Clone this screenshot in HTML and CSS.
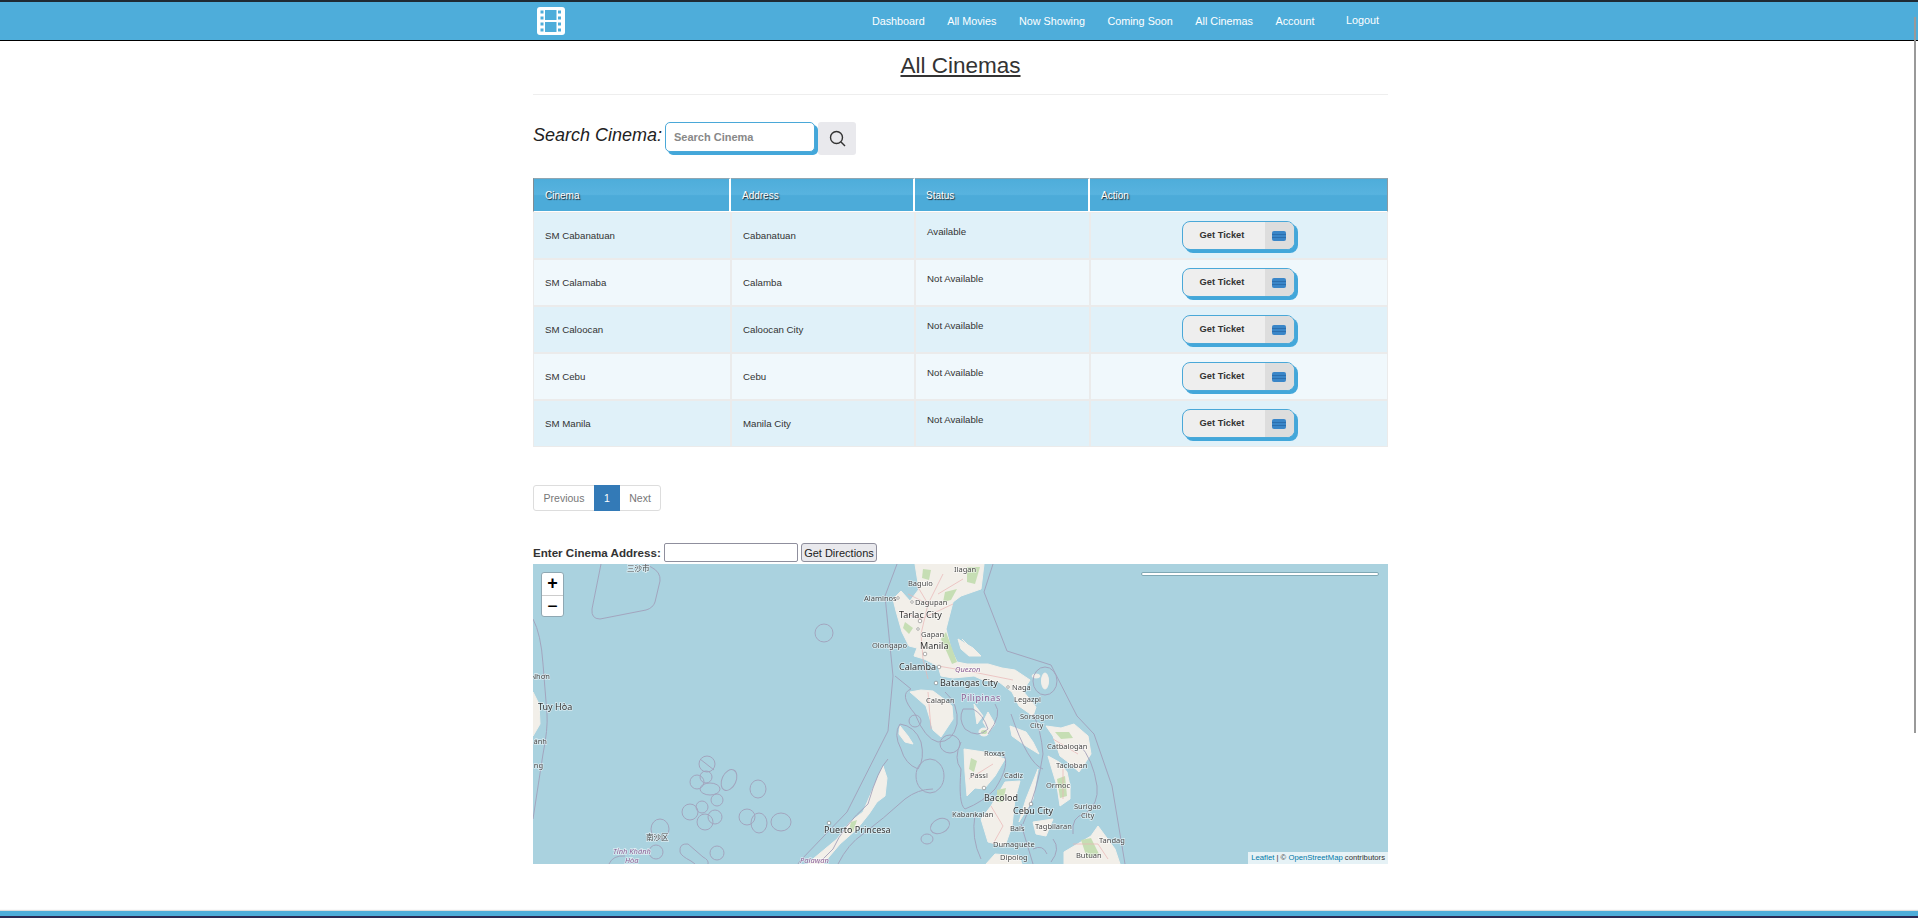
FILE: index.html
```html
<!DOCTYPE html>
<html lang="en">
<head>
    <meta charset="UTF-8">
    <meta name="viewport" content="width=device-width, initial-scale=1.0">
    <title>All Cinemas</title>
    <link rel="stylesheet" href="styles.css">
</head>
<body>
    <header class="topbar">
        <div class="topbar-inner">
            <a class="logo" href="#">
                <svg width="28" height="28" viewBox="0 0 28 28">
                    <rect width="28" height="28" rx="3" fill="#fff"/>
                    <g fill="#4eadda">
                        <rect x="8" y="3" width="11.5" height="10"/>
                        <rect x="8" y="15" width="11.5" height="10"/>
                        <rect x="3.5" y="3.5" width="3" height="3"/>
                        <rect x="3.5" y="9.5" width="3" height="3"/>
                        <rect x="3.5" y="15.5" width="3" height="3"/>
                        <rect x="3.5" y="21.5" width="3" height="3"/>
                        <rect x="21" y="3.5" width="3" height="3"/>
                        <rect x="21" y="9.5" width="3" height="3"/>
                        <rect x="21" y="15.5" width="3" height="3"/>
                        <rect x="21" y="21.5" width="3" height="3"/>
                    </g>
                </svg>
            </a>
            <nav class="nav">
                <a href="#">Dashboard</a>
                <a href="#">All Movies</a>
                <a href="#">Now Showing</a>
                <a href="#">Coming Soon</a>
                <a href="#">All Cinemas</a>
                <a href="#">Account</a>
                <a class="logout" href="#">Logout</a>
            </nav>
        </div>
    </header>

    <div class="scroll-thumb"></div>

    <main class="page">
        <h1 class="page-title">All Cinemas</h1>

        <form class="search-row">
            <label class="search-label" for="search">Search Cinema:</label>
            <input class="search-input" id="search" type="text" placeholder="Search Cinema">
            <button class="search-button" type="button">
                <svg width="17" height="17" viewBox="0 0 17 17" fill="none" stroke="#333" stroke-width="1.4">
                    <circle cx="7.5" cy="7.5" r="6"/>
                    <path d="M12 12l4 4"/>
                </svg>
            </button>
        </form>

        <table class="cinema-table">
            <colgroup>
                <col class="col-cinema">
                <col class="col-address">
                <col class="col-status">
                <col class="col-action">
            </colgroup>
            <thead>
                <tr>
                    <th>Cinema</th>
                    <th>Address</th>
                    <th>Status</th>
                    <th>Action</th>
                </tr>
            </thead>
            <tbody>
                <tr>
                    <td>SM Cabanatuan</td>
                    <td>Cabanatuan</td>
                    <td class="status">Available</td>
                    <td class="action"><a class="ticket-button" href="#"><span class="ticket-text">Get Ticket</span><span class="ticket-icon"><svg width="14" height="10" viewBox="0 0 14 10"><rect width="14" height="10" rx="2" fill="#3a86c8"/><path d="M0 3.5h14M0 6.5h14" stroke="#2c6fae" stroke-width="1"/></svg></span></a></td>
                </tr>
                <tr>
                    <td>SM Calamaba</td>
                    <td>Calamba</td>
                    <td class="status">Not Available</td>
                    <td class="action"><a class="ticket-button" href="#"><span class="ticket-text">Get Ticket</span><span class="ticket-icon"><svg width="14" height="10" viewBox="0 0 14 10"><rect width="14" height="10" rx="2" fill="#3a86c8"/><path d="M0 3.5h14M0 6.5h14" stroke="#2c6fae" stroke-width="1"/></svg></span></a></td>
                </tr>
                <tr>
                    <td>SM Caloocan</td>
                    <td>Caloocan City</td>
                    <td class="status">Not Available</td>
                    <td class="action"><a class="ticket-button" href="#"><span class="ticket-text">Get Ticket</span><span class="ticket-icon"><svg width="14" height="10" viewBox="0 0 14 10"><rect width="14" height="10" rx="2" fill="#3a86c8"/><path d="M0 3.5h14M0 6.5h14" stroke="#2c6fae" stroke-width="1"/></svg></span></a></td>
                </tr>
                <tr>
                    <td>SM Cebu</td>
                    <td>Cebu</td>
                    <td class="status">Not Available</td>
                    <td class="action"><a class="ticket-button" href="#"><span class="ticket-text">Get Ticket</span><span class="ticket-icon"><svg width="14" height="10" viewBox="0 0 14 10"><rect width="14" height="10" rx="2" fill="#3a86c8"/><path d="M0 3.5h14M0 6.5h14" stroke="#2c6fae" stroke-width="1"/></svg></span></a></td>
                </tr>
                <tr>
                    <td>SM Manila</td>
                    <td>Manila City</td>
                    <td class="status">Not Available</td>
                    <td class="action"><a class="ticket-button" href="#"><span class="ticket-text">Get Ticket</span><span class="ticket-icon"><svg width="14" height="10" viewBox="0 0 14 10"><rect width="14" height="10" rx="2" fill="#3a86c8"/><path d="M0 3.5h14M0 6.5h14" stroke="#2c6fae" stroke-width="1"/></svg></span></a></td>
                </tr>
            </tbody>
        </table>

        <div class="pagination">
            <a href="#">Previous</a>
            <a class="active" href="#">1</a>
            <a href="#">Next</a>
        </div>

        <div class="directions">
            <label for="address">Enter Cinema Address:</label>
            <input id="address" type="text">
            <button type="button">Get Directions</button>
        </div>

        <div class="map">
            <svg class="map-tiles" width="855" height="300" viewBox="0 0 855 300">
                <!-- land -->
                <g class="land">
                    <path d="M382,0 L451,0 L448,25 L428,32 L420,38 L413,65 L418,85 L424,98 L434,100 L455,100 L469,104 L482,106 L497,116 L490,127 L503,143 L500,152 L486,142 L479,128 L466,118 L450,116 L441,112 L420,114 L408,112 L405,102 L391,95 L381,92 L384,84 L376,82 L369,68 L363,47 L360,35 L368,27 L377,37 L386,25 Z"/>
                    <path d="M377,128 L388,126 L400,127 L412,136 L419,142 L420,155 L408,173 L400,166 L397,155 L393,142 Z"/>
                    <path d="M513,162 L528,164 L541,160 L555,172 L558,190 L546,208 L535,198 L527,192 L520,172 Z"/>
                    <path d="M515,192 L526,198 L534,208 L537,222 L537,235 L527,242 L524,222 Z"/>
                    <path d="M477,162 L493,168 L500,178 L506,190 L493,182 L479,172 Z"/>
                    <path d="M431,185 L451,188 L472,195 L462,212 L451,225 L442,224 L434,232 L432,208 Z"/>
                    <path d="M472,218 L487,217 L482,235 L479,262 L472,282 L455,278 L448,255 L458,242 Z"/>
                    <path d="M505,205 L500,235 L486,258 L493,235 Z"/>
                    <path d="M500,258 L520,255 L513,272 L503,270 Z"/>
                    <path d="M531,288 L558,272 L565,262 L582,285 L587,300 L531,300 Z"/>
                    <path d="M453,300 L462,290 L486,292 L489,300 Z"/>
                    <path d="M350,202 L342,220 L330,248 L317,258 L304,275 L280,295 L275,300 L290,300 L307,280 L324,265 L336,250 L344,238 L352,232 L354,214 Z"/>
                    <ellipse cx="512" cy="117" rx="3.5" ry="8"/>
                    <path d="M367,162 L375,172 L380,180 L372,178 L366,170 Z"/>
                    <path d="M0,128 L6,140 L7,160 L0,172 Z"/>
                    <path d="M425,75 L440,84 L448,92 L436,92 L428,85 Z"/>
                    <path d="M429,75 L436,82 M441,140 L450,152 L444,160 Z"/>
                    <path d="M455,148 L462,160 L456,168 L450,158 Z"/>
                    <path d="M538,178 L546,176 L548,188 L540,190 Z"/>
                    <ellipse cx="451" cy="168" rx="5" ry="4"/>
                    <ellipse cx="503" cy="112" rx="4" ry="2"/>
                </g>
                <!-- forest -->
                <g class="forest">
                    <path d="M413,68 L424,98 L419,100 L408,75 Z"/>
                    <path d="M434,3 L447,3 L442,20 L434,18 Z"/>
                    <path d="M372,58 L380,64 L376,70 L370,64 Z"/>
                    <path d="M390,5 L398,6 L396,16 L389,14 Z"/>
                    <path d="M412,28 L424,25 L418,36 L410,38 Z"/>
                    <path d="M522,168 L536,168 L540,174 L528,175 Z"/>
                    <path d="M524,215 L532,212 L534,232 L527,234 Z"/>
                    <path d="M548,276 L558,274 L566,290 L554,294 Z"/>
                    <path d="M438,194 L444,197 L441,208 L436,205 Z"/>
                    <path d="M464,226 L473,224 L470,238 L464,238 Z"/>
                    <path d="M318,258 L324,256 L320,268 L316,266 Z"/>
                    <ellipse cx="451" cy="168" rx="3" ry="2"/>
                </g>
                <!-- roads -->
                <g class="roads">
                    <path d="M382,18 L395,40 L388,70 L390,95 L395,115"/>
                    <path d="M368,48 L388,55 L420,40"/>
                    <path d="M410,10 L395,40 M430,15 L405,30 M375,30 L395,40"/>
                    <path d="M405,102 L440,108 L480,116"/>
                    <path d="M458,242 L470,262 L460,280"/>
                    <path d="M436,215 L460,200 M520,175 L545,190 M530,205 L530,235"/>
                    <path d="M395,128 L398,165"/>
                    <path d="M540,280 L565,280 L575,295"/>
                </g>
                <!-- boundaries -->
                <g class="borders">
                    <path d="M68,0 L59,45 Q58,55 67,55 L113,46 Q120,44 122,38 L127,17 Q128,8 118,3 L112,0"/>
                    <path d="M0,55 Q8,70 10,100 L14,150 Q15,165 10,190 L0,255"/>
                    <path d="M364,0 L352,32 L360,112 L355,167 L314,248 L267,297 L265,300"/>
                    <path d="M460,0 L451,28 L474,87 L518,101 L544,152 L561,170 L579,222 L592,300"/>
                    <circle cx="291" cy="69" r="9"/>
                    <circle cx="174" cy="200" r="8"/>
                    <path d="M167,195 L181,206"/>
                    <circle cx="164" cy="218" r="7"/>
                    <circle cx="173" cy="213" r="6"/>
                    <ellipse cx="196" cy="216" rx="7" ry="11" transform="rotate(25 196 216)"/>
                    <ellipse cx="177" cy="225" rx="10" ry="6"/>
                    <circle cx="184" cy="236" r="6"/>
                    <circle cx="157" cy="248" r="8"/>
                    <circle cx="169" cy="243" r="6"/>
                    <circle cx="172" cy="258" r="8"/>
                    <circle cx="182" cy="253" r="7"/>
                    <ellipse cx="225" cy="225" rx="8" ry="9"/>
                    <circle cx="214" cy="253" r="8"/>
                    <ellipse cx="226" cy="259" rx="8" ry="10"/>
                    <ellipse cx="248" cy="258" rx="10" ry="9"/>
                    <ellipse cx="127" cy="265" rx="9" ry="10"/>
                    <circle cx="123" cy="288" r="7"/>
                    <path d="M147,288 Q146,279 155,280 L170,293 Q176,296 175,300 M147,288 Q148,292 158,297 L162,300"/>
                    <circle cx="184" cy="289" r="7"/>
                    <path d="M76,300 Q80,291 92,292"/>
                    <circle cx="382" cy="157" r="6"/>
                    <ellipse cx="397" cy="212" rx="14" ry="17"/>
                    <ellipse cx="417" cy="180" rx="10" ry="9"/>
                    <ellipse cx="407" cy="262" rx="10" ry="7" transform="rotate(-25 407 262)"/>
                    <ellipse cx="394" cy="275" rx="6" ry="5"/>
                    <ellipse cx="512" cy="117" rx="12" ry="14"/>
                    <path d="M367,160 Q360,170 368,185 Q372,200 385,205 Q392,195 388,178 Q382,162 367,160 Z"/>
                    <path d="M355,195 Q345,205 335,240 Q310,262 300,285 L285,300"/>
                    <path d="M400,225 Q385,225 372,235 Q350,255 330,270 Q315,280 305,300"/>
                    <path d="M362,112 Q372,120 378,125 Q365,130 382,150 Q392,175 405,178 Q420,178 424,160 Q426,140 412,128"/>
                    <path d="M430,145 Q425,155 432,165 Q445,175 455,165 Q450,150 440,145 Z"/>
                    <path d="M428,178 Q420,195 428,205 Q425,240 432,245 Q450,238 462,225 Q478,200 470,190"/>
                    <path d="M455,170 Q470,150 462,140 M478,150 Q495,200 510,205 M488,260 Q494,280 500,300"/>
                    <path d="M546,180 Q560,195 564,222 Q566,240 552,250 Q538,252 540,270"/>
                    <path d="M500,150 Q508,165 510,190 Q505,225 490,260"/>
                    <path d="M442,250 Q438,275 448,295"/>
                    <path d="M520,275 Q528,285 518,298 M500,285 Q510,280 514,290"/>
                </g>
                <!-- labels -->
                <g class="labels">
                    <text x="94" y="7">三沙市</text>
                    <text x="113" y="276">南沙区</text>
                    <text class="big" x="5" y="146">Tuy Hòa</text>
                    <text x="17" y="115" text-anchor="end">Nhơn</text>
                    <text x="14" y="180" text-anchor="end">ánh</text>
                    <text x="10" y="204" text-anchor="end">ng</text>
                    <text class="big" x="291" y="269">Puerto Princesa</text>
                    <text x="421" y="8">Ilagan</text>
                    <text x="375" y="22">Baguio</text>
                    <text x="331" y="37">Alaminos</text>
                    <text x="382" y="41">Dagupan</text>
                    <text class="big" x="366" y="54">Tarlac City</text>
                    <text x="388" y="73">Gapan</text>
                    <text x="339" y="84">Olongapo</text>
                    <text class="big" x="387" y="85">Manila</text>
                    <text class="big" x="366" y="106">Calamba</text>
                    <text class="big" x="407" y="122">Batangas City</text>
                    <text x="393" y="139">Calapan</text>
                    <text x="479" y="126">Naga</text>
                    <text x="481" y="138">Legazpi</text>
                    <text x="487" y="155">Sorsogon</text>
                    <text x="497" y="164">City</text>
                    <text x="514" y="185">Catbalogan</text>
                    <text x="523" y="204">Tacloban</text>
                    <text x="513" y="224">Ormoc</text>
                    <text x="451" y="192">Roxas</text>
                    <text x="437" y="214">Passi</text>
                    <text x="471" y="214">Cadiz</text>
                    <text class="big" x="451" y="237">Bacolod</text>
                    <text class="big" x="480" y="250">Cebu City</text>
                    <text x="419" y="253">Kabankalan</text>
                    <text x="541" y="245">Surigao</text>
                    <text x="548" y="254">City</text>
                    <text x="477" y="267">Bais</text>
                    <text x="502" y="265">Tagbilaran</text>
                    <text x="460" y="283">Dumaguete</text>
                    <text x="566" y="279">Tandag</text>
                    <text x="543" y="294">Butuan</text>
                    <text x="467" y="296">Dipolog</text>
                    <text class="region" x="422" y="108">Quezon</text>
                    <text class="region country" x="428" y="137">Pilipinas</text>
                    <text class="region" x="80" y="290">Tỉnh Khánh</text>
                    <text class="region" x="92" y="299">Hòa</text>
                    <text class="region" x="267" y="299">Palawan</text>
                </g>
                <!-- town dots -->
                <g class="towns">
                    <circle cx="365" cy="34" r="1.3"/>
                    <circle cx="379" cy="38" r="1.3"/>
                    <circle cx="387" cy="57" r="1.8"/>
                    <circle cx="385" cy="65" r="1.3"/>
                    <circle cx="392" cy="90" r="1.8"/>
                    <circle cx="406" cy="103" r="1.8"/>
                    <circle cx="403" cy="119" r="1.8"/>
                    <circle cx="475" cy="123" r="1.3"/>
                    <circle cx="451" cy="224" r="1.8"/>
                    <circle cx="498" cy="240" r="1.8"/>
                    <circle cx="296" cy="259" r="1.8"/>
                </g>
            </svg>

            <div class="map-searchbar"></div>

            <div class="zoom-control">
                <a class="zoom-in" href="#">+</a>
                <a class="zoom-out" href="#">&#8722;</a>
            </div>

            <div class="attribution"><a href="#">Leaflet</a> | &copy; <a href="#">OpenStreetMap</a> contributors</div>
        </div>
    </main>

    <footer class="footer"></footer>
</body>
</html>
```

FILE: styles.css
```css
html, body {
    margin: 0;
    padding: 0;
    height: 918px;
    overflow: hidden;
}
body {
    font-family: "Liberation Sans", Arial, sans-serif;
    background-color: #fff;
    color: #333;
    position: relative;
}
.topbar {
    background-color: #4eadda;
    border-top: 2px solid #1f2a33;
    border-bottom: 1px solid #000;
    height: 38px;
    padding-left: 3px;
}
.topbar-inner {
    width: 855px;
    height: 100%;
    margin: 0 auto;
    display: flex;
    align-items: center;
}
.logo {
    display: flex;
    margin-left: 4px;
}
.nav {
    display: flex;
    align-items: center;
    margin-left: auto;
    padding-right: 9px;
    gap: 22.5px;
}
.nav a {
    color: #fff;
    text-decoration: none;
    font-size: 10.8px;
}
.nav a.logout {
    margin-left: 9px;
    position: relative;
    top: -1px;
}
.scroll-thumb {
    position: absolute;
    top: 17px;
    right: 2px;
    width: 2px;
    height: 716px;
    background-color: #999;
}
.page {
    width: 855px;
    margin: 0 auto;
    padding-left: 3px;
    box-sizing: content-box;
}
.page-title {
    margin: 0;
    height: 53px;
    line-height: 50px;
    font-size: 22.5px;
    font-weight: normal;
    text-align: center;
    text-decoration: underline;
    border-bottom: 1px solid #eee;
}
.search-row {
    display: flex;
    align-items: center;
    margin-top: 27px;
    height: 33px;
}
.search-label {
    font-size: 18px;
    font-style: italic;
    color: #222;
    width: 132px;
    margin-top: -7px;
    white-space: nowrap;
}
.search-input {
    width: 150px;
    height: 30px;
    box-sizing: border-box;
    margin-bottom: 3px;
    padding: 0 8px;
    border: 1px solid #4aa8d8;
    border-radius: 5px;
    box-shadow: 3px 3px 0 #43a7da;
    font-family: inherit;
    font-size: 11px;
    font-weight: bold;
    outline: none;
}
.search-input::placeholder {
    color: #888;
}
.search-button {
    width: 38px;
    height: 33px;
    margin-left: 3px;
    padding: 0;
    border: none;
    border-radius: 3px;
    background-color: #e9e9ed;
    display: flex;
    align-items: center;
    justify-content: center;
}
.cinema-table {
    width: 855px;
    margin-top: 23px;
    table-layout: fixed;
    border-collapse: separate;
    border-spacing: 0;
    font-size: 9.7px;
}
.col-cinema { width: 198px; }
.col-address { width: 184px; }
.col-status { width: 175px; }
.col-action { width: 298px; }
.cinema-table th {
    height: 32px;
    padding: 0 0 0 11px;
    text-align: left;
    font-size: 10px;
    font-weight: normal;
    color: #fff;
    text-shadow: 1px 1px 1px #222;
    background: linear-gradient(#4eadda 0%, #58b3df 48%, #4cabd9 52%, #4cabd9 100%);
    border-right: 2px solid #fff;
    border-bottom: 1px solid #fff;
    border-top: 1px solid #8fa6b2;
    box-sizing: content-box;
}
.cinema-table th:first-child {
    border-left: 1px solid #7f8c94;
}
.cinema-table th:last-child {
    border-right: 1px solid #8f9aa1;
}
.cinema-table td {
    height: 45px;
    padding: 0 0 0 11px;
    border: 1px solid #ebebeb;
    color: #333;
    box-sizing: content-box;
}
.cinema-table tbody tr:nth-child(odd) td {
    background-color: #e0f1f9;
}
.cinema-table tbody tr:nth-child(even) td {
    background-color: #f0f8fc;
}
.cinema-table td.status {
    vertical-align: top;
    padding-top: 13px;
    height: 32px;
}
.cinema-table td.action {
    padding: 0;
    text-align: center;
}
.ticket-button {
    display: inline-flex;
    align-items: stretch;
    width: 113px;
    height: 29px;
    box-sizing: border-box;
    margin: 0 2px 0 0;
    vertical-align: middle;
    border: 1px solid #4aa8d8;
    border-radius: 8px;
    box-shadow: 3px 3px 0 #43a7da;
    background-color: #eee;
    color: #333;
    text-decoration: none;
}
.ticket-text {
    flex: 1;
    padding-right: 3px;
    font-size: 9.3px;
    font-weight: bold;
    line-height: 27px;
}
.ticket-icon {
    width: 29px;
    display: flex;
    align-items: center;
    justify-content: center;
    background-color: #ddd;
    border-radius: 0 7px 7px 0;
}
.pagination {
    display: flex;
    width: max-content;
    margin-top: 38px;
    height: 26px;
    box-sizing: border-box;
    border: 1px solid #ddd;
    border-radius: 3px;
    font-size: 10.5px;
}
.pagination a {
    display: flex;
    align-items: center;
    justify-content: center;
    color: #777;
    text-decoration: none;
    width: 60px;
}
.pagination a.active {
    background-color: #337ab7;
    color: #fff;
    width: 26px;
    margin: -1px 0;
}
.pagination a:last-child {
    width: 40px;
}
.directions {
    display: flex;
    align-items: center;
    margin-top: 32px;
    height: 19px;
    margin-bottom: 2px;
    font-size: 11.6px;
}
.directions label {
    font-weight: bold;
    width: 131px;
    white-space: nowrap;
}
.directions input {
    width: 134px;
    height: 19px;
    box-sizing: border-box;
    padding: 0 2px;
    border: 1px solid #8f8f9d;
    border-radius: 2px;
}
.directions button {
    width: 76px;
    height: 19px;
    margin-left: 3px;
    padding: 0;
    border: 1px solid #8f8f9d;
    border-radius: 3px;
    background-color: #e9e9ed;
    font-family: inherit;
    font-size: 11px;
    color: #222;
}
.map {
    position: relative;
    width: 855px;
    height: 300px;
    overflow: hidden;
    background-color: #aad2df;
}
.map-tiles {
    display: block;
    filter: blur(0.35px);
}
.land {
    fill: #f2efe9;
    stroke: #f2efe9;
    stroke-width: 1;
    stroke-linejoin: round;
}
.forest { fill: #c6deb4; }
.roads {
    fill: none;
    stroke: #eab5b5;
    stroke-width: 0.7;
}
.borders {
    fill: none;
    stroke: #a19db8;
    stroke-width: 1;
    opacity: 0.85;
}
.labels text {
    font-family: "Noto Sans", "Noto Sans CJK SC", sans-serif;
    font-size: 7.5px;
    fill: #4a4a4a;
    stroke: rgba(255, 255, 255, 0.55);
    stroke-width: 1.6px;
    paint-order: stroke;
}
.labels text.big {
    font-size: 9px;
    fill: #333;
}
.labels text.region {
    fill: #8b5f95;
    font-style: italic;
}
.labels text.country {
    font-size: 9px;
    font-style: normal;
    letter-spacing: 0.5px;
}
.towns {
    fill: #fff;
    stroke: #666;
    stroke-width: 0.5;
}
.map-searchbar {
    position: absolute;
    top: 8px;
    right: 9px;
    width: 236px;
    height: 2px;
    background-color: #fff;
    border: 1px solid #7fa8b5;
    border-radius: 2px;
}
.zoom-control {
    position: absolute;
    top: 8px;
    left: 8px;
    width: 23px;
    height: 45px;
    box-sizing: border-box;
    background-color: #fff;
    border: 1px solid #8fa8b3;
    border-radius: 3px;
}
.zoom-control a {
    display: block;
    height: 22px;
    line-height: 21px;
    text-align: center;
    font-size: 18px;
    font-weight: bold;
    color: #000;
    text-decoration: none;
}
.zoom-control .zoom-in {
    border-bottom: 1px solid #ccc;
}
.zoom-control .zoom-out {
    font-weight: normal;
}
.attribution {
    position: absolute;
    right: 0;
    bottom: 0;
    height: 12px;
    line-height: 12px;
    padding: 0 3px;
    background-color: rgba(255, 255, 255, 0.7);
    font-size: 7.7px;
    color: #333;
    white-space: nowrap;
}
.attribution a {
    color: #0078a8;
    text-decoration: none;
}
.footer {
    position: absolute;
    left: 0;
    right: 0;
    bottom: 0;
    height: 5px;
    background-color: #4eadda;
    border-bottom: 2px solid #2b2a55;
    box-shadow: 0 -1px 1px #ddd;
}
```
